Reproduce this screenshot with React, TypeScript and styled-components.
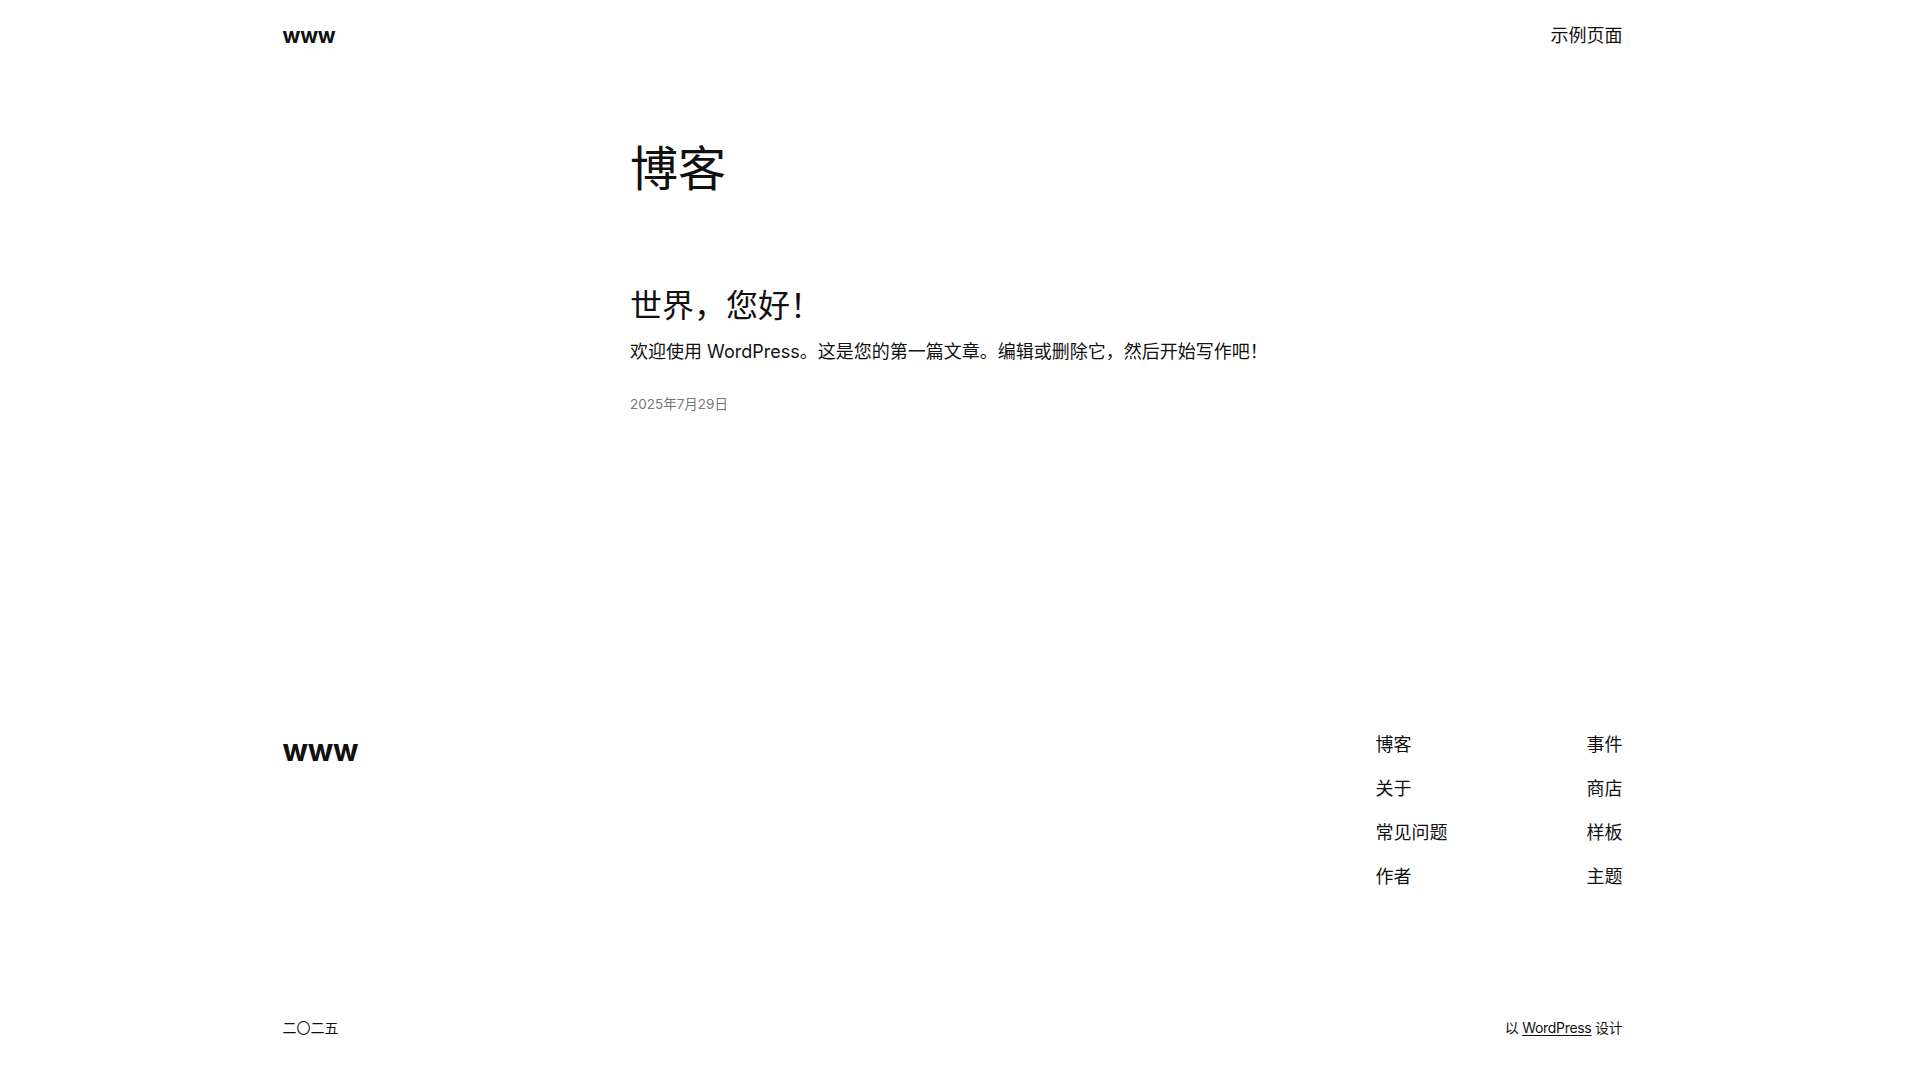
import React from "react";
import styled, { createGlobalStyle } from "styled-components";

const Global = createGlobalStyle`
  html { overflow-y: scroll; }
  body {
    margin: 0;
    background: #ffffff;
    color: #111111;
    font-family: Inter, "Noto Sans CJK SC", sans-serif;
  }
  a { color: inherit; text-decoration: none; }
`;

/* The reference was taken with a 15px vertical scrollbar, so the page
   content is laid out in a 1905px wide viewport. */
const Page = styled.div`
  width: 1905px;
  display: flex;
  flex-direction: column;
  min-height: 1110px;
`;

const Wide = styled.div`
  width: 1340px;
  margin: 0 auto;
`;

const Header = styled(Wide)`
  height: 71px;
  display: flex;
  align-items: center;
  justify-content: space-between;
`;

const SiteTitle = styled.a<{ $size: number }>`
  font-family: Inter, sans-serif;
  font-weight: 700;
  font-size: ${(p) => p.$size}px;
  line-height: 1.2;
  letter-spacing: -0.2px;
  color: #111;
`;

const NavLink = styled.a`
  font-size: 18px;
  line-height: 1.4;
  color: #111;
`;

const Main = styled.main`
  width: 645px;
  margin: 0 auto;
  padding-top: 68px;
  display: flex;
  flex-direction: column;
`;

const PageHeading = styled.h1`
  margin: 0;
  font-size: 48px;
  font-weight: 400;
  line-height: 60px;
`;

const Post = styled.article`
  margin-top: 88px;
  display: flex;
  flex-direction: column;
`;

const PostTitle = styled.h2`
  margin: 0;
  font-size: 32px;
  font-weight: 400;
  line-height: 38px;
`;

const Excerpt = styled.p`
  margin: 13px 0 0;
  font-size: 18px;
  line-height: 28px;
  color: #111;
`;

const PostDate = styled.time`
  margin-top: 28px;
  font-size: 13.5px;
  line-height: 20px;
  color: #777;
`;

const Footer = styled(Wide)`
  margin-top: 318px;
  display: flex;
  flex-direction: column;
`;

const FooterTop = styled.div`
  display: flex;
  justify-content: space-between;
  align-items: flex-start;
`;

const FooterNav = styled.nav`
  width: 247px;
  display: flex;
  justify-content: space-between;
`;

const NavColumn = styled.ul`
  list-style: none;
  margin: 0;
  padding: 0;
  display: flex;
  flex-direction: column;
  gap: 19px;
`;

const FooterItem = styled.li`
  font-size: 18px;
  line-height: 25px;
  color: #111;
`;

const FooterTitleWrap = styled.div`
  padding-top: 0;
`;

const FooterBottom = styled.div`
  margin-top: 129px;
  display: flex;
  justify-content: space-between;
  font-size: 14px;
  line-height: 20px;
  color: #111;
  padding-bottom: 71px;
`;

const Credit = styled.span`
  letter-spacing: -0.3px;
`;

const Underlined = styled.a`
  text-decoration: underline;
  text-underline-offset: 2px;
`;

const col1 = ["博客", "关于", "常见问题", "作者"];
const col2 = ["事件", "商店", "样板", "主题"];

export default function App() {
  return (
    <Page>
      <Global />
      <Header as="header">
        <SiteTitle $size={21} href="#">www</SiteTitle>
        <NavLink href="#">示例页面</NavLink>
      </Header>
      <Main>
        <PageHeading>博客</PageHeading>
        <Post>
          <PostTitle>世界，您好！</PostTitle>
          <Excerpt>欢迎使用 WordPress。这是您的第一篇文章。编辑或删除它，然后开始写作吧！</Excerpt>
          <PostDate>2025年7月29日</PostDate>
        </Post>
      </Main>
      <Footer as="footer">
        <FooterTop>
          <FooterTitleWrap>
            <SiteTitle $size={30} href="#">www</SiteTitle>
          </FooterTitleWrap>
          <FooterNav>
            <NavColumn>
              {col1.map((t) => (
                <FooterItem key={t}>{t}</FooterItem>
              ))}
            </NavColumn>
            <NavColumn>
              {col2.map((t) => (
                <FooterItem key={t}>{t}</FooterItem>
              ))}
            </NavColumn>
          </FooterNav>
        </FooterTop>
        <FooterBottom>
          <span>二〇二五</span>
          <Credit>
            以 <Underlined href="#">WordPress</Underlined> 设计
          </Credit>
        </FooterBottom>
      </Footer>
    </Page>
  );
}
